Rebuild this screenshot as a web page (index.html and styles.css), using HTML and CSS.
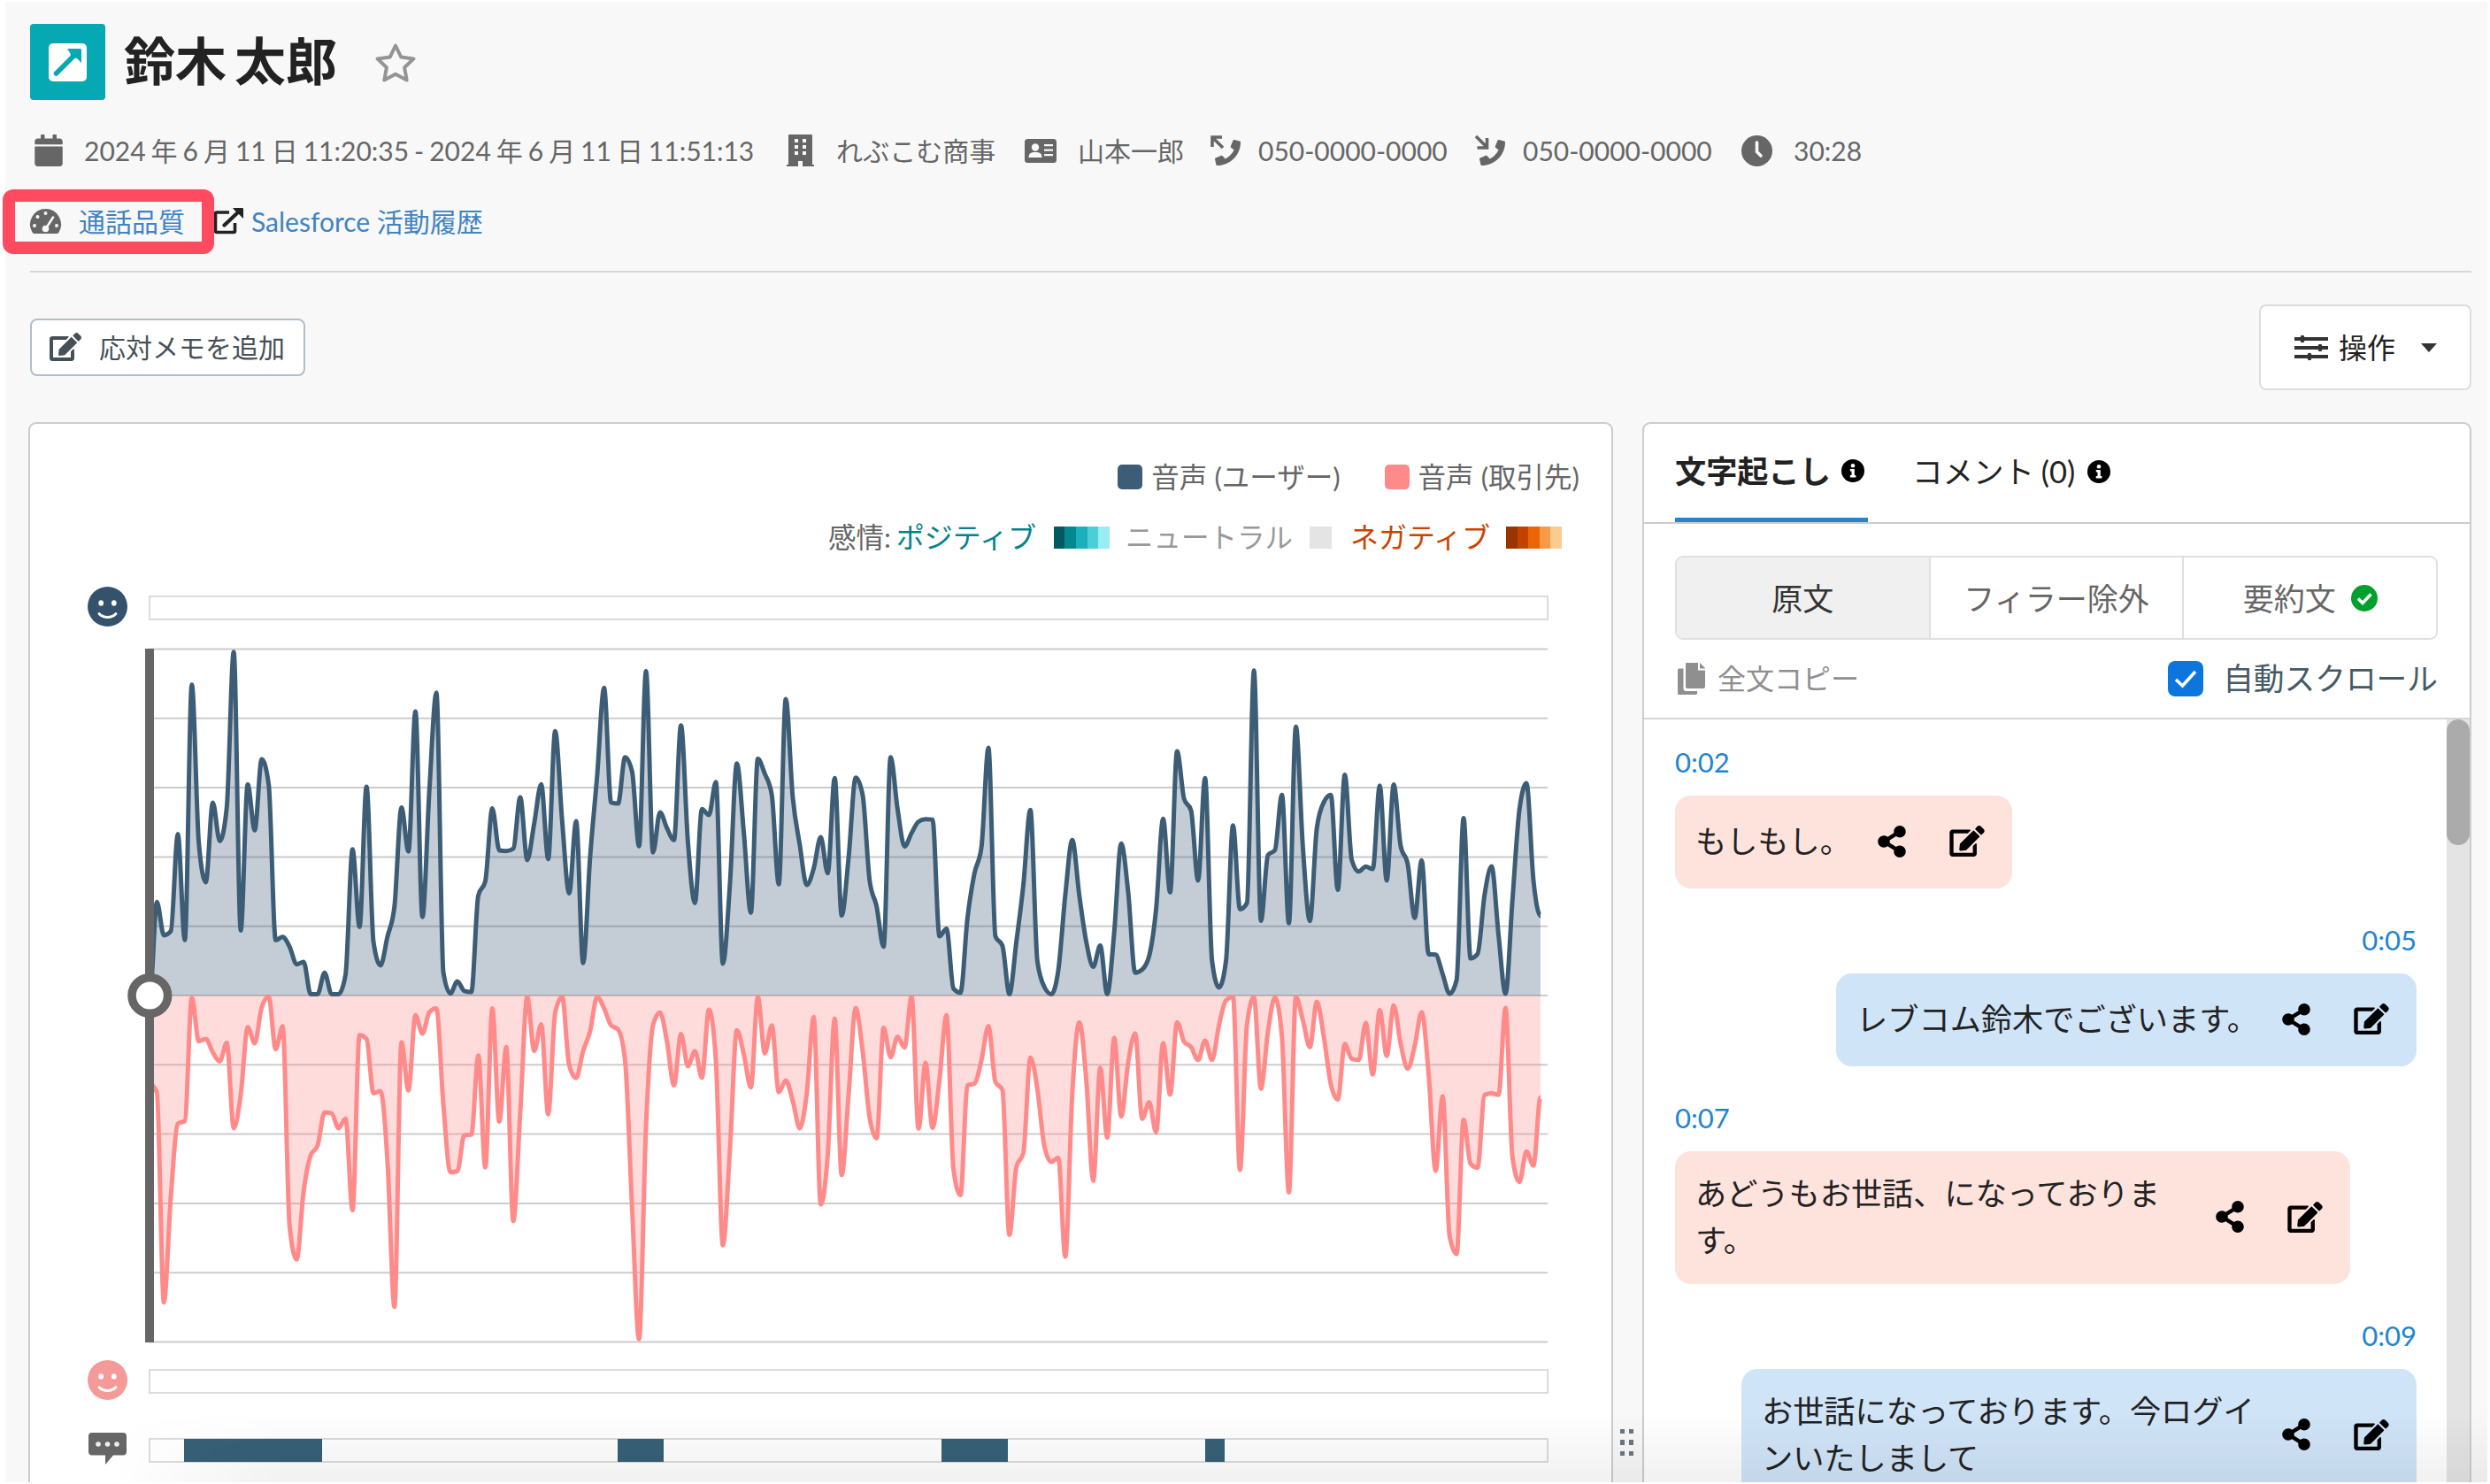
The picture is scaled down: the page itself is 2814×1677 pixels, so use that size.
FILE: index.html
```
<!DOCTYPE html>
<html lang="ja">
<head>
    <meta charset="UTF-8">
    <meta name="viewport" content="width=device-width, initial-scale=1.0">
    <title>鈴木 太郎</title>
    <link rel="stylesheet" href="styles.css">
</head>
<body>

    <!-- icons used more than once -->
    <svg class="sprite">
        <symbol id="edit" viewBox="0 0 576 512">
            <path d="M402.6 83.2l90.2 90.2c3.8 3.8 3.8 10 0 13.8L274.4 405.6l-92.8 10.3c-12.4 1.4-22.9-9.1-21.5-21.5l10.3-92.8L388.8 83.2c3.8-3.8 10-3.8 13.8 0zm162-22.9l-48.8-48.8c-15.2-15.2-39.9-15.2-55.2 0l-35.4 35.4c-3.8 3.8-3.8 10 0 13.8l90.2 90.2c3.8 3.8 10 3.8 13.8 0l35.4-35.4c15.2-15.3 15.2-40 0-55.2zM384 346.2V448H64V128h229.8c3.2 0 6.2-1.3 8.5-3.5l40-40c7.6-7.6 2.2-20.5-8.5-20.5H48C21.5 64 0 85.5 0 112v352c0 26.5 21.5 48 48 48h352c26.5 0 48-21.5 48-48V306.2c0-10.7-12.9-16-20.5-8.5l-40 40c-2.2 2.3-3.5 5.3-3.5 8.5z"/>
        </symbol>
        <symbol id="share" viewBox="0 0 448 512">
            <path d="M352 320c-22.6 0-43.4 7.8-59.8 20.9l-102.5-64a96.5 96.5 0 0 0 0-41.7l102.5-64.1C308.6 184.2 329.4 192 352 192c53 0 96-43 96-96S405 0 352 0s-96 43-96 96c0 7.2.8 14.1 2.3 20.8L155.8 180.9C139.4 167.8 118.6 160 96 160c-53 0-96 43-96 96s43 96 96 96c22.6 0 43.4-7.8 59.8-20.9l102.5 64.1A96.3 96.3 0 0 0 256 416c0 53 43 96 96 96s96-43 96-96-43-96-96-96z"/>
        </symbol>
        <symbol id="smile" viewBox="0 0 45 45">
            <circle cx="22.5" cy="22.5" r="22.5"/>
            <ellipse cx="15.2" cy="18.5" rx="2.8" ry="3.2" fill="#fff"/>
            <ellipse cx="29.8" cy="18.5" rx="2.8" ry="3.2" fill="#fff"/>
            <path d="M13 30.5c4.5 5.3 14.5 5.3 19 0" fill="none" stroke="#fff" stroke-width="2.8" stroke-linecap="round"/>
        </symbol>
        <symbol id="info" viewBox="0 0 26 26">
            <circle cx="13" cy="13" r="13"/>
            <circle cx="13" cy="7.3" r="2.3" fill="#fff"/>
            <path d="M9.8 11h5v7h1.6v2.5H9.8V18h1.7v-4.5H9.8z" fill="#fff"/>
        </symbol>
        <symbol id="handset" viewBox="0 0 512 512">
            <path d="M493.4 24.6l-104-24c-11.3-2.6-22.9 3.3-27.5 13.9l-48 112c-4.2 9.8-1.4 21.3 6.9 28l60.6 49.6c-36 76.7-98.9 140.5-177.2 177.2l-49.6-60.6c-6.8-8.3-18.2-11.1-28-6.9l-112 48C3.9 366.5-2 378.1.6 389.4l24 104C27.1 504.2 36.7 512 48 512c256.1 0 464-207.5 464-464 0-11.2-7.7-20.9-18.6-23.4z"/>
        </symbol>
    </svg>

    <div class="page">

        <header class="header">
            <div class="title-row">
                <div class="logo">
                    <svg width="43" height="43" viewBox="0 0 43 43">
                        <rect width="43" height="43" rx="5" fill="#fff"/>
                        <path d="M8.5 34L33 9.5" stroke="#06a9b3" stroke-width="5.5" stroke-linecap="round"/>
                        <path d="M21 6h14.5a1.5 1.5 0 0 1 1.5 1.5V22l-5-5-7-1-.5-4.5z" fill="#06a9b3"/>
                    </svg>
                </div>
                <h1 class="title">鈴木 太郎</h1>
                <svg class="star" width="48" height="46" viewBox="0 0 48 46">
                    <path d="M24 3.5l6.2 12.9 14.3 2-10.4 9.9 2.6 14.2L24 35.7l-12.7 6.8 2.6-14.2L3.5 18.4l14.3-2z" fill="none" stroke="#949494" stroke-width="4" stroke-linejoin="round"/>
                </svg>
            </div>

            <div class="meta">
                <div class="meta-item date">
                    <svg width="32" height="36" viewBox="0 0 448 512"><path d="M12 192h424c6.6 0 12 5.4 12 12v260c0 26.5-21.5 48-48 48H48c-26.5 0-48-21.5-48-48V204c0-6.6 5.4-12 12-12zm436-44v-36c0-26.5-21.5-48-48-48h-48V12c0-6.6-5.4-12-12-12h-40c-6.6 0-12 5.4-12 12v52H160V12c0-6.6-5.4-12-12-12h-40c-6.6 0-12 5.4-12 12v52H48C21.5 64 0 85.5 0 112v36c0 6.6 5.4 12 12 12h424c6.6 0 12-5.4 12-12z"/></svg>
                    <span>2024 年 6 月 11 日 11:20:35 - 2024 年 6 月 11 日 11:51:13</span>
                </div>
                <div class="meta-item company">
                    <svg width="31" height="36" viewBox="0 0 31 36"><path fill-rule="evenodd" d="M3 0h25a1 1 0 0 1 1 1v33h2v2H18v-6h-5v6H0v-2h2V1a1 1 0 0 1 1-1zM9 5v4h4V5zm9 0v4h4V5zM9 12v4h4v-4zm9 0v4h4v-4zM9 19v4h4v-4zm9 0v4h4v-4z"/></svg>
                    <span>れぶこむ商事</span>
                </div>
                <div class="meta-item person">
                    <svg width="36" height="27" viewBox="0 0 36 27"><path fill-rule="evenodd" d="M3.5 0h29A3.5 3.5 0 0 1 36 3.5v20a3.5 3.5 0 0 1-3.5 3.5h-29A3.5 3.5 0 0 1 0 23.5v-20A3.5 3.5 0 0 1 3.5 0zM22 6v2.2h10V6zm0 5.5v2.2h10v-2.2zm0 5.5v2.2h10V17z"/><circle cx="12" cy="9.5" r="4.2" fill="#f8f8f8"/><path d="M4.5 21c0-4.5 2.5-6 7.5-6s7.5 1.5 7.5 6z" fill="#f8f8f8"/></svg>
                    <span>山本一郎</span>
                </div>
                <div class="meta-item phone">
                    <svg width="34" height="34" viewBox="0 0 34 34"><use href="#handset" x="5" y="5" width="29" height="29"/><path d="M2 13V2h11M3 3l11 11" fill="none" stroke="#666" stroke-width="3.6"/></svg>
                    <span>050-0000-0000</span>
                </div>
                <div class="meta-item phone">
                    <svg width="34" height="34" viewBox="0 0 34 34"><use href="#handset" x="5" y="5" width="29" height="29"/><path d="M13.5 3v11h-11M1 1l12 12" fill="none" stroke="#666" stroke-width="3.6"/></svg>
                    <span>050-0000-0000</span>
                </div>
                <div class="meta-item clock">
                    <svg width="35" height="35" viewBox="0 0 35 35"><circle cx="17.5" cy="17.5" r="17.5"/><path d="M17.5 8v10.5l4.5 4.5" fill="none" stroke="#f8f8f8" stroke-width="3.6" stroke-linecap="round"/></svg>
                    <span>30:28</span>
                </div>
            </div>

            <div class="links">
                <a class="quality">
                    <svg width="35" height="28" viewBox="0 0 35 28"><path d="M17.5 0A17.5 17.5 0 0 0 2.5 26.5 2.5 2.5 0 0 0 4.5 28h26a2.5 2.5 0 0 0 2-1.5A17.5 17.5 0 0 0 17.5 0z"/><g fill="#f8f8f8"><circle cx="17.5" cy="5" r="2"/><circle cx="8.5" cy="9" r="2"/><circle cx="5" cy="19" r="2"/><circle cx="30" cy="19" r="2"/><circle cx="17.5" cy="22.5" r="3.8"/></g><path d="M18 22l8-12.5" stroke="#f8f8f8" stroke-width="2.6" stroke-linecap="round"/></svg>
                    <span>通話品質</span>
                </a>
                <a class="salesforce">
                    <svg width="34" height="30" viewBox="0 0 34 30"><path d="M18 5H4a1.5 1.5 0 0 0-1.5 1.5v19A1.5 1.5 0 0 0 4 27.5h19a1.5 1.5 0 0 0 1.5-1.5V17" fill="none" stroke="#222" stroke-width="3.6"/><path d="M12.5 19.5L29 4" stroke="#222" stroke-width="4.2" stroke-linecap="round"/><path d="M22 0h11a1 1 0 0 1 1 1v11l-3.5-3.5L25 3.5z" fill="#222"/></svg>
                    <span>Salesforce 活動履歴</span>
                </a>
                <div class="highlight"></div>
            </div>
        </header>

        <div class="toolbar">
            <button class="memo-button">
                <svg width="36" height="32"><use href="#edit"/></svg>
                <span>応対メモを追加</span>
            </button>
            <button class="action-button">
                <svg width="38" height="28" viewBox="0 0 38 28"><path d="M0 4h38M0 14h38M0 24h38" stroke="#333" stroke-width="4"/><path d="M9 2v4M29 12v4M17 22v4" stroke="#333" stroke-width="4.6" stroke-linecap="round"/></svg>
                <span>操作</span>
                <i class="caret"></i>
            </button>
        </div>

        <div class="panels">

            <section class="panel wave-panel">
                <div class="legend">
                    <span class="box user-box"></span><span class="legend-user">音声 (ユーザー)</span>
                    <span class="box client-box"></span><span>音声 (取引先)</span>
                </div>
                <div class="legend emotions">
                    <span>感情:</span>
                    <span class="positive">ポジティブ</span>
                    <span class="scale"><i class="p1"></i><i class="p2"></i><i class="p3"></i><i class="p4"></i><i class="p5"></i></span>
                    <span class="neutral">ニュートラル</span>
                    <span class="scale neutral-scale"></span>
                    <span class="negative">ネガティブ</span>
                    <span class="scale"><i class="n1"></i><i class="n2"></i><i class="n3"></i><i class="n4"></i><i class="n5"></i></span>
                </div>

                <div class="track first">
                    <svg class="user-smile" width="45" height="45"><use href="#smile"/></svg>
                    <div class="bar"></div>
                </div>

                <svg id="wave" class="wave" width="1582" height="784" viewBox="0 0 1582 784">
                    <g id="grid" class="grid"></g>
                    <path id="userArea" class="user-area"/>
                    <path id="clientArea" class="client-area"/>
                    <path id="userLine" class="user-line"/>
                    <path id="clientLine" class="client-line"/>
                    <rect class="cursor" x="-4" y="0" width="10" height="784"/>
                    <circle class="knob" cx="1.3" cy="392" r="20.3"/>
                </svg>

                <div class="track second">
                    <svg class="client-smile" width="45" height="45"><use href="#smile"/></svg>
                    <div class="bar"></div>
                </div>
                <div class="track third">
                    <svg class="comment" width="43" height="36" viewBox="0 0 43 36"><path d="M4 0h35a4 4 0 0 1 4 4v17.5a4 4 0 0 1-4 4H28L19 36V25.5H4a4 4 0 0 1-4-4V4a4 4 0 0 1 4-4z"/><g fill="#eee"><circle cx="11" cy="13" r="2.8"/><circle cx="21.5" cy="13" r="2.8"/><circle cx="32" cy="13" r="2.8"/></g></svg>
                    <div class="bar">
                        <i class="segment" style="left: 38px; width: 156px"></i>
                        <i class="segment" style="left: 528px; width: 52px"></i>
                        <i class="segment" style="left: 894px; width: 75px"></i>
                        <i class="segment" style="left: 1192px; width: 22px"></i>
                    </div>
                </div>
            </section>

            <div class="divider">
                <div class="handle"><i></i><i></i><i></i><i></i><i></i><i></i></div>
            </div>

            <section class="panel text-panel">
                <div class="tabs">
                    <div class="tab active">文字起こし<svg width="26" height="26"><use href="#info"/></svg></div>
                    <div class="tab">コメント (0)<svg width="26" height="26"><use href="#info"/></svg></div>
                </div>
                <div class="controls">
                    <div class="switch">
                        <button class="selected">原文</button>
                        <button>フィラー除外</button>
                        <button>要約文<svg width="30" height="30" viewBox="0 0 30 30"><circle cx="15" cy="15" r="15" fill="#00a02c"/><path d="M8 15.5l5 5 9.5-10" fill="none" stroke="#fff" stroke-width="3.6"/></svg></button>
                    </div>
                    <div class="options">
                        <div class="copy">
                            <svg width="32" height="36" viewBox="0 0 32 36"><path d="M10 0h13v8.5h8V27a2 2 0 0 1-2 2H11a2 2 0 0 1-2-2V1a1 1 0 0 1 1-1zM25 0l6.5 6.5H25zM1.5 6.5H6.5V29a3 3 0 0 0 3 3H22v2.5a1.5 1.5 0 0 1-1.5 1.5h-19A1.5 1.5 0 0 1 0 34.5V8a1.5 1.5 0 0 1 1.5-1.5z"/></svg>
                            全文コピー
                        </div>
                        <div class="auto">
                            <span class="checkbox"><svg width="40" height="40" viewBox="0 0 40 40"><path d="M9 21l7.5 7L31 12" fill="none" stroke="#fff" stroke-width="3.6"/></svg></span>
                            自動スクロール
                        </div>
                    </div>
                </div>
                <div class="talk">
                    <div class="messages">
                        <div class="message">
                            <div class="time">0:02</div>
                            <div class="bubble"><p>もしもし。</p><svg class="share" width="32" height="36"><use href="#share"/></svg><svg width="40" height="35"><use href="#edit"/></svg></div>
                        </div>
                        <div class="message mine">
                            <div class="time">0:05</div>
                            <div class="bubble"><p>レブコム鈴木でございます。</p><svg class="share" width="32" height="36"><use href="#share"/></svg><svg width="40" height="35"><use href="#edit"/></svg></div>
                        </div>
                        <div class="message">
                            <div class="time">0:07</div>
                            <div class="bubble long"><p>あどうもお世話、になっておりま<br>す。</p><svg class="share" width="32" height="36"><use href="#share"/></svg><svg width="40" height="35"><use href="#edit"/></svg></div>
                        </div>
                        <div class="message mine">
                            <div class="time">0:09</div>
                            <div class="bubble long"><p>お世話になっております。今ログイ<br>ンいたしまして</p><svg class="share" width="32" height="36"><use href="#share"/></svg><svg width="40" height="35"><use href="#edit"/></svg></div>
                        </div>
                    </div>
                    <div class="scrollbar"><div class="thumb"></div></div>
                </div>
            </section>
        </div>

        <div class="shade"></div>
    </div>

    <script src="chart.js"></script>
</body>
</html>
```
FILE: styles.css
```
* {
    box-sizing: border-box;
}

body {
    margin: 0;
    height: 1677px;
    padding: 2px 3px 2px 6px;
    overflow: hidden;
    background-color: #ffffff;
    color: #222222;
    font-family: Lato, "Noto Sans CJK JP", sans-serif;
    font-size: 30px;
    line-height: 40px;
    white-space: nowrap;
}

svg {
    display: block;
    flex: none;
    overflow: visible;
}

button {
    font: inherit;
    background-color: #ffffff;
}

.sprite {
    position: absolute;
    width: 0;
    height: 0;
}

.page {
    position: relative;
    display: flex;
    flex-direction: column;
    height: 1673px;
    padding: 25px 18px 0 26px;
    background-color: #f8f8f8;
}

/* header */

.header {
    margin-left: 2px;
    padding-bottom: 35px;
    border-bottom: 2px solid #d6d6d6;
}

.title-row {
    display: flex;
    height: 86px;
}

.logo {
    display: flex;
    align-items: center;
    justify-content: center;
    width: 85px;
    border-radius: 4px;
    background-color: #06a9b3;
}

.title {
    width: 283px;
    margin: 0 0 0 21px;
    font-size: 58px;
    line-height: 83px;
    word-spacing: -5px;
}

.star {
    margin-top: 21px;
}

.meta {
    display: flex;
    margin-top: 37px;
    padding-left: 5px;
    color: #666666;
    fill: #666666;
}

.meta-item {
    display: flex;
    align-items: center;
}

.date {
    width: 850px;
    gap: 24px;
    word-spacing: -1.7px;
}

.company {
    width: 269px;
    gap: 25px;
}

.person {
    width: 210px;
    gap: 24px;
}

.phone {
    width: 299px;
    gap: 20px;
}

.clock {
    gap: 24px;
    padding-left: 2px;
}

.links {
    position: relative;
    display: flex;
    margin-top: 40px;
    margin-bottom: 1px;
    color: #4183c4;
}

.links a {
    display: flex;
    align-items: center;
}

.quality {
    width: 207px;
    gap: 20px;
    fill: #666666;
}

.salesforce {
    gap: 9px;
}

.highlight {
    position: absolute;
    left: -31px;
    top: -16px;
    width: 239px;
    height: 73px;
    border: 14px solid #ff4a60;
    border-radius: 12px;
}

/* toolbar */

.toolbar {
    display: flex;
    align-items: center;
    justify-content: space-between;
    margin: 36px 0 36px 2px;
}

.memo-button {
    display: flex;
    align-items: center;
    gap: 20px;
    width: 311px;
    height: 65px;
    padding: 0 20px 1px;
    border: 2px solid #b0bec8;
    border-radius: 8px;
    color: #455058;
    fill: #455058;
}

.action-button {
    display: flex;
    align-items: center;
    width: 240px;
    height: 97px;
    padding: 0 38px;
    border: 2px solid #dddddd;
    border-radius: 8px;
    color: #222222;
    font-size: 32px;
}

.action-button span {
    margin: 0 29px 0 12px;
}

.caret {
    border: 9px solid transparent;
    border-top: 10px solid #333333;
    border-bottom: 0;
}

/* panels */

.panels {
    display: flex;
    flex: 1;
    min-height: 0;
}

.panel {
    border: 2px solid #cccccc;
    border-bottom: 0;
    border-radius: 9px 9px 0 0;
    background-color: #ffffff;
}

.wave-panel {
    width: 1791px;
    padding-top: 40px;
}

.legend {
    display: flex;
    align-items: center;
    justify-content: flex-end;
    padding-right: 36px;
    color: #666666;
    font-size: 31.5px;
}

.box {
    width: 28px;
    height: 28px;
    margin-right: 10px;
    border-radius: 5px;
}

.user-box {
    background-color: #3d5c76;
}

.client-box {
    background-color: #ff8a8a;
}

.legend-user {
    margin-right: 50px;
}

.emotions {
    margin-top: 28px;
    padding-right: 56px;
}

.scale {
    display: flex;
    width: 63px;
    height: 25px;
}

.scale i {
    flex: 1;
}

.positive {
    margin: 0 20px 0 6px;
    color: #05828a;
    font-size: 32px;
}

.neutral {
    margin: 0 19px 0 18px;
    color: #999999;
}

.neutral-scale {
    width: 25px;
    background-color: #e4e4e4;
}

.negative {
    margin: 0 18px 0 21px;
    color: #c94400;
    font-size: 32px;
}

.p1 { background-color: #025a60; }
.p2 { background-color: #058790; }
.p3 { background-color: #1ab1bc; }
.p4 { background-color: #4bcfd7; }
.p5 { background-color: #99edf1; }
.n1 { background-color: #9a3500; }
.n2 { background-color: #c24300; }
.n3 { background-color: #ea6604; }
.n4 { background-color: #f89a45; }
.n5 { background-color: #fdca8f; }

.track {
    display: flex;
    align-items: center;
    width: 1716px;
    height: 46px;
    padding-left: 65px;
}

.first {
    margin-top: 35px;
}

.second {
    margin-top: 19px;
}

.third {
    margin-top: 34px;
}

.bar {
    position: relative;
    flex: 1;
    height: 28px;
    margin: 4px 0 0 24px;
    border: 2px solid #dcdcdc;
    background-color: #ffffff;
}

.third .bar {
    margin: 0 0 0 25px;
}

.user-smile {
    fill: #34526b;
}

.client-smile {
    fill: #f49a99;
}

.comment {
    fill: #666666;
    margin-left: 1px;
    margin-top: -4px;
}

.segment {
    position: absolute;
    top: -1px;
    height: 26px;
    background-color: #376077;
}

.wave {
    margin: 25px 0 0 134px;
}

.grid {
    stroke: #cccccc;
    stroke-width: 2;
}

.user-area {
    fill: rgba(59, 90, 115, 0.3);
}

.client-area {
    fill: rgba(255, 138, 138, 0.3);
}

.user-line,
.client-line {
    fill: none;
    stroke: #3c5d75;
    stroke-width: 5;
    stroke-linejoin: round;
}

.client-line {
    stroke: #ff8a8a;
}

.cursor {
    fill: #666666;
}

.knob {
    fill: #ffffff;
    stroke: #666666;
    stroke-width: 9.6;
}

.divider {
    display: flex;
    align-items: flex-end;
    justify-content: center;
    width: 33px;
    padding: 0 2px 30px 0;
}

.handle {
    display: grid;
    grid-template-columns: 5px 5px;
    gap: 7px 5px;
}

.handle i {
    height: 5.5px;
    background-color: #6b7780;
}

/* transcript */

.text-panel {
    display: flex;
    flex-direction: column;
    width: 937px;
}

.tabs {
    display: flex;
    gap: 50px;
    height: 113px;
    padding-left: 35px;
    border-bottom: 2px solid #cccccc;
    font-size: 34.5px;
}

.tab {
    display: flex;
    align-items: center;
    gap: 14px;
    height: 111px;
    padding-bottom: 4px;
    word-spacing: -1px;
}

.tab.active {
    width: 218px;
    padding-bottom: 0;
    gap: 12px;
    border-bottom: 5px solid #2185d0;
    font-size: 35.2px;
    font-weight: bold;
}

.controls {
    height: 221px;
    padding: 36px 36px 0 35px;
    border-bottom: 2px solid #cfd8dc;
}

.switch {
    display: flex;
    height: 95px;
    overflow: hidden;
    border: 2px solid #e0e0e0;
    border-radius: 9px;
}

.switch button {
    display: flex;
    flex: 1;
    align-items: center;
    justify-content: center;
    gap: 17px;
    border: 0;
    color: #666666;
    font-size: 35px;
}

.switch button + button {
    border-left: 2px solid #e0e0e0;
}

.switch .selected {
    background-color: #f0f0f0;
    color: #333333;
}

.options {
    display: flex;
    align-items: center;
    justify-content: space-between;
    margin-top: 24px;
}

.copy {
    display: flex;
    align-items: center;
    gap: 13px;
    padding-left: 3px;
    color: #8f8f8f;
    fill: #8f8f8f;
    font-size: 32px;
}

.auto {
    display: flex;
    align-items: center;
    gap: 22px;
    color: #455a64;
    font-size: 34.7px;
}

.checkbox {
    border-radius: 8px;
    background-color: #0d76de;
}

.talk {
    display: flex;
    flex: 1;
    min-height: 0;
    overflow: hidden;
}

.messages {
    flex: 1;
    padding: 28px 34px 0 35px;
}

.message {
    display: flex;
    flex-direction: column;
    align-items: flex-start;
    margin-bottom: 38px;
}

.mine {
    align-items: flex-end;
}

.time {
    margin-bottom: 18px;
    color: #2185d0;
    font-size: 31px;
}

.bubble {
    display: flex;
    align-items: center;
    min-height: 105px;
    padding: 21px 31px 23px 23px;
    border-radius: 18px;
    background-color: #fee3dd;
    font-size: 35.2px;
    line-height: 53px;
}

.mine .bubble {
    background-color: #d0e4f8;
}

.bubble p {
    min-width: 179px;
    margin: 0;
}

.share {
    margin: 0 49px 0 27px;
}

.long {
    width: 763px;
}

.long p {
    width: 561px;
}

.scrollbar {
    width: 26px;
    background-color: #e4e4e4;
}

.thumb {
    height: 142px;
    border-radius: 13px;
    background-color: #ababab;
}

.shade {
    position: absolute;
    left: 120px;
    right: 0;
    bottom: 0;
    height: 80px;
    background: linear-gradient(to bottom, rgba(0, 0, 0, 0), rgba(0, 0, 0, 0.055));
    -webkit-mask-image: linear-gradient(to right, transparent, #000 200px);
    mask-image: linear-gradient(to right, transparent, #000 200px);
}
```
FILE: chart.js
```
var user = [
    0, 27, 17.4, 18.6, 46.6, 16, 89.7, 44, 32.7, 55.7,
    44.6, 54.3, 99.2, 18.8, 60.9, 47.7, 68.2, 60.9, 16, 16.9,
    14, 9, 9.7, 0.4, 0.4, 6.6, 0.4, 0.4, 6, 42.2,
    19.8, 60.3, 15.4, 8.7, 17, 25.7, 54.3, 41.6, 82, 22.7,
    59.4, 87.4, 6.6, 0.6, 4.1, 1.3, 1, 28.9, 33, 54,
    41.9, 41.7, 42.4, 57.2, 39.1, 49.7, 61, 39.4, 76.3, 50.3,
    29.5, 50.3, 9.4, 40, 63.3, 88.8, 55.7, 55.4, 68.8, 64.7,
    43.1, 93.6, 41.3, 52.9, 48.3, 44.9, 78, 44.2, 26.7, 53.8,
    52.1, 61.6, 9.2, 31.9, 67, 46.9, 23.9, 68.3, 64, 57.9,
    32.1, 85.6, 57.2, 43.5, 31.9, 36.7, 45.7, 35.3, 62.8, 23.1,
    40, 62.9, 57.9, 33.2, 25.7, 14.1, 68.8, 53.8, 43, 46.9,
    50.2, 50.9, 50.8, 17.1, 19.3, 2, 0.8, 22.3, 35.3, 42.8,
    71.5, 17.1, 14.4, 0.4, 15.5, 31.9, 53.6, 10, 2.5, 0.4,
    7.3, 29, 44.9, 29, 15.5, 8.3, 14.4, 0.4, 18.2, 43.9,
    29.8, 6.6, 7.5, 11.4, 25, 51, 29.8, 70.5, 56.8, 53.4,
    33.2, 62.8, 10, 2.3, 10, 49.1, 24.9, 26.7, 93.8, 21.6,
    40.5, 42, 57.9, 20.9, 77.6, 42.8, 21.5, 48.3, 55.8, 57.9,
    30.5, 63.7, 39.1, 35.8, 37.2, 36.5, 60.6, 33.2, 60.9, 43.1,
    38, 22.4, 39, 11.9, 11.8, 6.2, 0.5, 4.5, 51.2, 10.7,
    12, 29, 37.3, 17.5, 0.5, 27.8, 53.8, 61.3, 33.2, 23
];

var client = [
    25.7, 27.9, 88.6, 57.9, 37, 36.2, 0.7, 13.2, 12.5, 16.4,
    19, 13.6, 38.3, 28.6, 9.1, 13.8, 3.4, 0.3, 15.5, 8.9,
    66.7, 76.2, 56.5, 46.2, 43.3, 33.7, 34, 38.3, 35.5, 62,
    11.4, 12.5, 28.2, 27.6, 47.7, 89.9, 13.5, 27.4, 5.7, 11,
    4.8, 3.7, 31.5, 51, 50.7, 40.3, 40.2, 17.3, 49.6, 3.7,
    36.4, 14.9, 65.1, 33.8, 0.4, 16, 8.3, 34.3, 5, 0.4,
    20.1, 23.8, 16, 10.3, 0.4, 3.7, 8.6, 9.8, 18.7, 61,
    99.2, 37.9, 8.5, 4.9, 13.3, 25.9, 11.1, 20.4, 16, 23.7,
    4.1, 18.7, 72.1, 44.7, 10, 17, 26.5, 0.4, 16.7, 8.6,
    27.9, 24.5, 30.4, 38.3, 28.3, 6.2, 60.3, 46.1, 6.7, 51.8,
    28.3, 3.6, 16, 35.2, 41.2, 9.3, 17.8, 11.9, 15, 0.4,
    38.4, 19.4, 38.2, 24.2, 5.7, 50.2, 57.6, 25.9, 25.4, 18.7,
    8.8, 24.9, 27.2, 69.1, 49.5, 45.4, 17.9, 26.9, 43.4, 48,
    46.8, 75.4, 28.3, 7.7, 24.2, 53.5, 20.9, 41, 12.2, 34.9,
    19.4, 10.9, 35.6, 30.8, 39.5, 13.7, 28.6, 7.7, 13.3, 14.9,
    18.6, 13, 18.6, 8.5, 1.4, 0.4, 50.3, 8.5, 0.4, 26.9,
    10.5, 0.5, 11.9, 56.8, 0.4, 7.1, 14.9, 1.8, 11.9, 25.6,
    30, 14, 18.3, 18.6, 7.9, 22.8, 4.2, 17.4, 2.9, 14,
    21.1, 14.6, 4.8, 22.8, 50.6, 29.1, 69.4, 74.6, 35.8, 48.6,
    49.7, 28.7, 28.2, 28.7, 3.6, 46.8, 53.8, 45, 49.1, 29.4
];

var middle = 392;
var step = 7.897;
var left = 1.4;

// monotone curve through the points, no overshoot at the peaks
function buildLine(values, direction) {
    var y = values.map(function (v) { return middle - direction * v * 3.915; });
    var slopes = y.map(function (v, i) {
        if (i === 0 || i === y.length - 1) return 0;
        var a = (y[i] - y[i - 1]) / step;
        var b = (y[i + 1] - y[i]) / step;
        if (a * b <= 0) return 0;
        return Math.sign(a) * Math.min(Math.abs(a), Math.abs(b), Math.abs(a + b) / 4) * 2;
    });

    var d = 'M' + left + ' ' + y[0];
    for (var i = 1; i < y.length; i++) {
        var x = left + i * step;
        d += 'C' + (x - step * 2 / 3) + ' ' + (y[i - 1] + slopes[i - 1] * step / 3) +
             ' ' + (x - step / 3) + ' ' + (y[i] - slopes[i] * step / 3) +
             ' ' + x + ' ' + y[i];
    }
    return d;
}

function draw(name, values, direction) {
    var line = buildLine(values, direction);
    document.getElementById(name + 'Line').setAttribute('d', line);
    document.getElementById(name + 'Area').setAttribute('d', line + 'V' + middle + 'H' + left + 'Z');
}

var lines = '';
for (var i = 0; i <= 10; i++) {
    var y = 0.5 + i * 78.3;
    lines += '<line x1="0" x2="1581" y1="' + y + '" y2="' + y + '"/>';
}
document.getElementById('grid').innerHTML = lines;

draw('user', user, 1);
draw('client', client, -1);
```
